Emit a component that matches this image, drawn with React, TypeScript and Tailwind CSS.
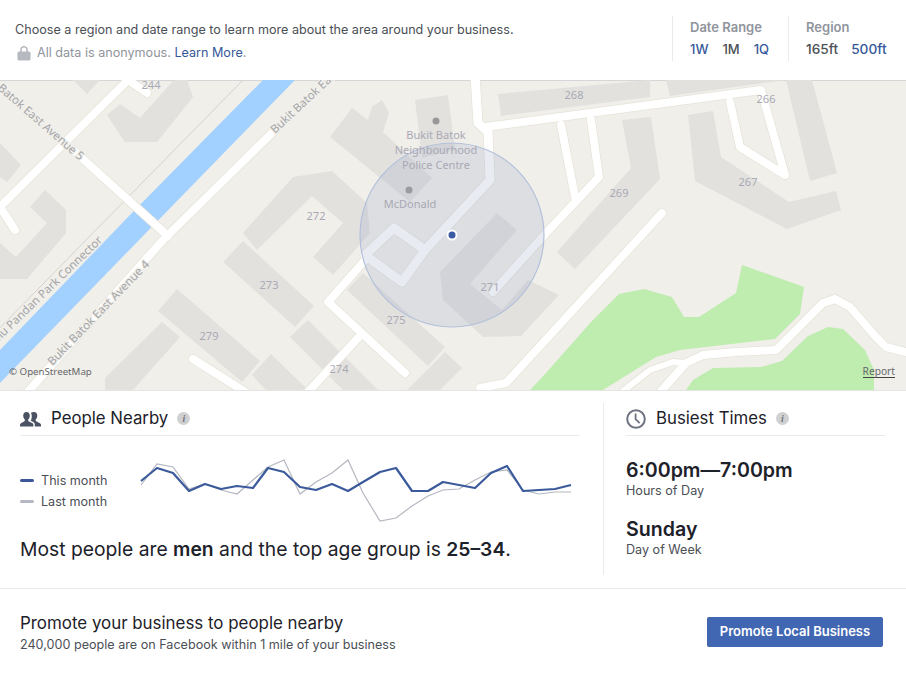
const sans = "font-['Inter','Liberation_Sans',sans-serif]";

const buildings = [
  "73,80 87,94 100,80",
  "107,115 120,104 140,118 172,82 176,80 187,80 193,97 157,142 125,142",
  "0,143 21,165 7,182 0,177",
  "30,207 45,190 66,210 66,233 27,279 0,279 0,243 16,257 47,223",
  "243,233 293,177 332,171 367,203 370,233 333,275 313,257 343,223 312,196 257,250",
  "330,137 352,108 368,120 372,107 382,100 389,113 383,132 432,178 410,202",
  "415,100 448,95 455,150 422,158",
  "498,94 650,80 650,97 501,116",
  "666,80 786,80 670,96",
  "786,80 812,80 837,173 810,181",
  "622,120 651,117 660,179 575,269 557,252 631,168",
  "688,115 713,111 721,157 789,202 836,191 841,210 787,229 695,181",
  "223,262 243,241 314,306 295,327",
  "158,311 177,289 260,361 242,382",
  "105,378 162,322 180,337 133,390 105,390",
  "290,337 308,320 378,390 343,390",
  "252,375 271,354 308,390 266,390",
  "347,290 363,273 445,347 428,366",
  "407,390 445,352 462,368 440,390",
  "497,213 517,230 470,284 502,310 528,280 559,295 521,336 483,337 443,300 440,272",
];

const greens = [
  "742,265 804,287 800,314 775,339 680,350 656,357 603,390 530,390 546,373 591,322 619,294 644,289 672,297 684,317 699,317 736,293",
  "686,390 693,380 713,368 761,367 782,361 808,336 828,327 843,329 865,350 874,370 874,390",
];

const roads: { pts: string; w: number }[] = [
  { pts: "73,150 168,236", w: 8 },
  { pts: "128,80 0,207", w: 8 },
  { pts: "0,207 15,230", w: 8 },
  { pts: "128,80 147,93", w: 8 },
  { pts: "277,128 163,240 25,395", w: 8 },
  { pts: "475,75 478,123 488,132 490,180 425,250 402,282 365,255 394,228 425,250", w: 9 },
  { pts: "367,258 328,302 405,373", w: 8 },
  { pts: "358,338 308,392", w: 8 },
  { pts: "486,127 761,90 785,175 740,147 730,102", w: 8 },
  { pts: "561,125 575,197", w: 8 },
  { pts: "591,120 599,177 546,233 493,292", w: 8 },
  { pts: "662,213 506,383 480,388", w: 8 },
  { pts: "193,359 250,395", w: 8 },
  { pts: "906,352 886,347 876,337 850,307 835,299 823,303 776,350 736,352 703,355 686,363 655,398", w: 8 },
  { pts: "686,363 673,362 650,370 618,395", w: 6 },
];

const labels = [
  { text: "244", x: 151, y: 89 },
  { text: "268", x: 574, y: 99 },
  { text: "266", x: 766, y: 103 },
  { text: "267", x: 748, y: 186 },
  { text: "269", x: 619, y: 197 },
  { text: "272", x: 316, y: 220 },
  { text: "273", x: 269, y: 289 },
  { text: "271", x: 490, y: 291 },
  { text: "275", x: 396, y: 324 },
  { text: "279", x: 209, y: 340 },
  { text: "274", x: 339, y: 373 },
  { text: "Bukit Batok", x: 436, y: 139 },
  { text: "Neighbourhood", x: 436, y: 154 },
  { text: "Police Centre", x: 436, y: 169 },
  { text: "McDonald", x: 410, y: 208 },
];

const thisMonth =
  "141,481 157,468 173,473 189,491 205,484 221,489 237,486 253,488 268,468 284,472 300,487 316,490 332,484 348,491 363,482 380,472 396,468 412,491 428,491 443,482 459,485 475,488 491,473 507,466 523,491 539,490 555,489 571,485";
const lastMonth =
  "141,485 157,464 173,467 189,489 205,484 221,490 237,494 253,480 268,467 284,460 300,494 316,482 332,473 348,460 363,493 380,521 396,518 412,506 428,496 443,490 459,489 475,480 491,472 507,470 523,490 539,494 555,492 571,492";

function MapView() {
  return (
    <div className="relative h-[310px] overflow-hidden bg-[#f0efea] shadow-[inset_0_1px_0_#d5d6d8]">
      <svg viewBox="0 80 906 310" className="block h-[310px] w-[906px] font-['Noto_Sans',sans-serif]">
        <polygon points="263,80 295,80 178,200 0,383 0,350 128,217" fill="#a3d1ff" />
        <line x1="243" y1="80" x2="-10" y2="338" stroke="#d3d2cc" strokeWidth="1" />
        {buildings.map((pts) => (
          <polygon key={pts} points={pts} fill="#e2e1de" />
        ))}
        {greens.map((pts) => (
          <polygon key={pts} points={pts} fill="#bfecaf" />
        ))}
        {roads.map((r) => (
          <polyline key={r.pts + "c"} points={r.pts} fill="none" stroke="#e6e3d8" strokeWidth={r.w + 1.5} strokeLinecap="round" strokeLinejoin="round" />
        ))}
        {roads.map((r) => (
          <polyline key={r.pts} points={r.pts} fill="none" stroke="#ffffff" strokeWidth={r.w} strokeLinecap="round" strokeLinejoin="round" />
        ))}
        <circle cx="436" cy="121" r="3.5" fill="#999999" />
        <circle cx="409" cy="190" r="3.5" fill="#999999" />
        <g fontSize="11.5" fill="#a5a5a8" stroke="#f0efea" strokeWidth="2.5" paintOrder="stroke">
          <text transform="translate(-3,89) rotate(41)">Batok East Avenue 5</text>
          <text transform="translate(275,134) rotate(-43)">Bukit Batok East</text>
          <text transform="translate(103,241) rotate(-44)" textAnchor="end">Ulu Pandan Park Connector</text>
          <text transform="translate(150,265) rotate(-46)" textAnchor="end">Bukit Batok East Avenue 4</text>
        </g>
        <circle cx="452" cy="235" r="92" fill="#95a2c6" fillOpacity="0.22" />
        <circle cx="452" cy="235" r="92" fill="none" stroke="#b3c0db" strokeWidth="1.2" />
        <circle cx="452" cy="235" r="5.5" fill="#ffffff" />
        <circle cx="452" cy="235" r="3.5" fill="#3b5ba5" />
        {labels.map((l) => (
          <text key={l.text} x={l.x} y={l.y} textAnchor="middle" fontSize="11" fill="#a9a9b5">
            {l.text}
          </text>
        ))}
      </svg>
      <span className="absolute bottom-[12px] left-[9px] font-['Noto_Sans',sans-serif] text-[9.7px] leading-[12px] text-[#66676b]">
        © OpenStreetMap
      </span>
      <span className="absolute bottom-[12px] right-[11px] border-b border-[#444] font-['Noto_Sans',sans-serif] text-[10.2px] leading-[12px] text-[#66676b]">
        Report
      </span>
    </div>
  );
}

function InfoDot() {
  return (
    <span className="flex h-[13px] w-[13px] items-center justify-center rounded-full bg-[#cfd0d2] font-['Liberation_Serif',serif] text-[10px] font-bold italic leading-none text-[#75777b]">
      i
    </span>
  );
}

function SectionHeading({ icon, title }: { icon: React.ReactNode; title: string }) {
  return (
    <div className="flex h-[33px] items-start border-b border-[#e9eaed] pt-[1px]">
      <div className="flex h-[29px] items-center">
        {icon}
        <h2 className="ml-[10px] text-[16.8px] font-normal leading-[29px] text-[#1d2129]">{title}</h2>
        <span className="ml-[9px]">
          <InfoDot />
        </span>
      </div>
    </div>
  );
}

function PeopleIcon() {
  return (
    <svg viewBox="0 0 21 16" className="h-[16px] w-[21px]" fill="#4b5263">
      <path d="M6.5 1C8.6 1 9.8 2.6 9.8 4.6 9.8 6.4 9 7.8 8.2 8.6V10L12.5 12.2C13.2 12.6 13.4 13.2 13.4 13.9V15.5H0V13.9C0 13.2.3 12.6 1 12.2L4.8 10V8.6C4 7.8 3.2 6.4 3.2 4.6 3.2 2.6 4.4 1 6.5 1Z" />
      <path d="M14 1C16.1 1 17.3 2.6 17.3 4.6 17.3 6.4 16.5 7.8 15.7 8.6V10L19.9 12.2C20.6 12.6 21 13.2 21 13.9V15.5H14.8V13.6C14.8 12.6 14.2 11.6 13.2 11.1L10.7 9.8C11.5 8.4 11.9 6.6 11.7 4.4 11.6 3.2 11.2 2.2 10.8 2 11.6 1.3 12.7 1 14 1Z" />
    </svg>
  );
}

function ClockIcon() {
  return (
    <svg viewBox="0 0 20 20" className="h-[20px] w-[20px]" fill="none" stroke="#6f7480" strokeWidth="2">
      <circle cx="10" cy="10" r="8.8" />
      <path d="M9.6 4.6V10.2L13.6 14.2" strokeWidth="1.8" />
    </svg>
  );
}

function RangeLink({ active, children }: { active?: boolean; children: React.ReactNode }) {
  return (
    <span className={active ? "font-medium text-[#365899]" : "font-medium text-[#4b4f56]"}>{children}</span>
  );
}

export default function App() {
  return (
    <div className={`h-[674px] w-[906px] overflow-hidden bg-white ${sans}`}>
      <header className="flex h-[80px] items-start justify-between">
        <div className="pl-[15px] pt-[20px]">
          <p className="text-[12.6px] leading-[19px] text-[#4b4f56]">
            Choose a region and date range to learn more about the area around your business.
          </p>
          <p className="mt-[4px] flex items-center text-[12.6px] leading-[19px] text-[#90949c]">
            <svg viewBox="0 0 14 16" className="ml-[2px] mr-[6px] h-[16px] w-[14px]" fill="#b6b9c0">
              <path d="M3.2 7V4.8C3.2 2.6 4.8 1 7 1S10.8 2.6 10.8 4.8V7H9.2V4.8C9.2 3.5 8.3 2.6 7 2.6S4.8 3.5 4.8 4.8V7Z" />
              <rect x="0.5" y="6.5" width="13" height="9" rx="1.5" />
            </svg>
            <span>
              All data is anonymous. <span className="text-[#365899]">Learn More</span>.
            </span>
          </p>
        </div>
        <div className="mt-[16px] flex h-[45px]">
          <div className="w-[116px] border-l border-[#e9eaed] pl-[17px]">
            <p className="text-[13px] font-semibold leading-[22px] text-[#90949c]">Date Range</p>
            <p className="flex gap-[14px] text-[13px] leading-[22px]">
              <RangeLink active>1W</RangeLink>
              <RangeLink>1M</RangeLink>
              <RangeLink active>1Q</RangeLink>
            </p>
          </div>
          <div className="w-[118px] border-l border-[#e9eaed] pl-[17px]">
            <p className="text-[13px] font-semibold leading-[22px] text-[#90949c]">Region</p>
            <p className="flex gap-[13px] text-[13.7px] leading-[22px]">
              <RangeLink>165ft</RangeLink>
              <RangeLink active>500ft</RangeLink>
            </p>
          </div>
        </div>
      </header>

      <MapView />

      <section className="flex h-[198px] border-t border-[#e4e4e2] pt-[12px]">
        <div className="w-[603px] pl-[20px] pr-[23px]">
          <SectionHeading icon={<PeopleIcon />} title="People Nearby" />
          <div className="flex h-[96px] items-start">
            <div className="mt-[34px] w-[120px] shrink-0">
              <p className="flex items-center text-[12.6px] leading-[21px] text-[#4b4f56]">
                <span className="mr-[7px] h-[3px] w-[14px] rounded-full bg-[#3b5998]" />
                This month
              </p>
              <p className="flex items-center text-[12.6px] leading-[21px] text-[#4b4f56]">
                <span className="mr-[7px] h-[3px] w-[14px] rounded-full bg-[#b4b8c2]" />
                Last month
              </p>
            </div>
            <svg viewBox="140 436 440 96" className="h-[96px] w-[440px] shrink-0" fill="none">
              <polyline points={lastMonth} stroke="#b4b7c0" strokeWidth="1.2" />
              <polyline points={thisMonth} stroke="#3b5a9b" strokeWidth="2.2" strokeLinejoin="round" />
            </svg>
          </div>
          <p className="mt-[4px] text-[19.3px] leading-[26px] text-[#1d2129]">
            Most people are <b className="font-semibold">men</b> and the top age group is <b className="font-semibold">25–34</b>.
          </p>
        </div>
        <div className="h-[172px] w-[303px] border-l border-[#e9eaed] pl-[22px] pr-[21px]">
          <SectionHeading icon={<ClockIcon />} title="Busiest Times" />
          <p className="mt-[21px] text-[19.6px] font-semibold leading-[26px] text-[#1d2129]">6:00pm—7:00pm</p>
          <p className="text-[12.6px] leading-[16px] text-[#4b4f56]">Hours of Day</p>
          <p className="mt-[17px] text-[19.6px] font-semibold leading-[26px] text-[#1d2129]">Sunday</p>
          <p className="text-[12.6px] leading-[16px] text-[#4b4f56]">Day of Week</p>
        </div>
      </section>

      <footer className="flex h-[86px] items-start justify-between border-t border-[#e9eaed] pl-[20px] pr-[23px] pt-[24px]">
        <div>
          <p className="text-[16.9px] leading-[21px] text-[#1d2129]">Promote your business to people nearby</p>
          <p className="text-[12.6px] leading-[22px] text-[#4b4f56]">240,000 people are on Facebook within 1 mile of your business</p>
        </div>
        <button type="button" className="mt-[4px] h-[30px] w-[176px] rounded-[2px] bg-[#4267b2] text-[13px] font-semibold text-white">
          Promote Local Business
        </button>
      </footer>
    </div>
  );
}
